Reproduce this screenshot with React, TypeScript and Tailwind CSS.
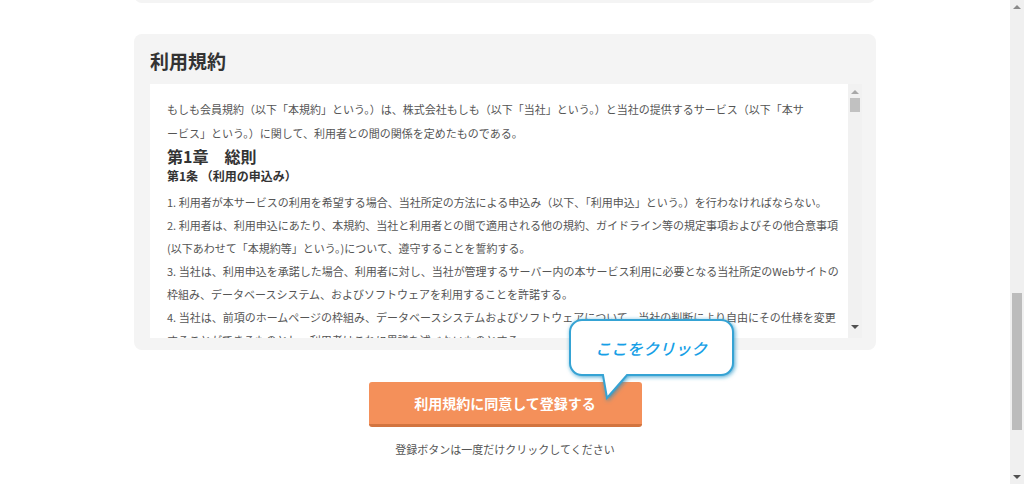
import React from "react";

const Arrow = ({ dir, color }: { dir: "up" | "down"; color: string }) =>
  dir === "up" ? (
    <div
      className="h-0 w-0 border-x-[4px] border-b-[4px] border-x-transparent"
      style={{ borderBottomColor: color }}
    />
  ) : (
    <div
      className="h-0 w-0 border-x-[4px] border-t-[4px] border-x-transparent"
      style={{ borderTopColor: color }}
    />
  );

function Bubble() {
  return (
    <div className="absolute left-[196px] top-[-67px] h-[95px] w-[180px]">
      <svg width="180" height="95" viewBox="0 0 180 95" className="absolute inset-0">
        <defs>
          <filter id="glow" x="-20%" y="-20%" width="140%" height="140%">
            <feDropShadow dx="1" dy="1" stdDeviation="2" floodColor="#1a8fc4" floodOpacity="0.8" />
          </filter>
        </defs>
        <path
          d="M17 5 H156 A12 12 0 0 1 168 17 V48 A12 12 0 0 1 156 60 H62 L42 83 L38 60 H17 A12 12 0 0 1 5 48 V17 A12 12 0 0 1 17 5 Z"
          fill="#ffffff"
          stroke="#36a3d4"
          strokeWidth="2"
          filter="url(#glow)"
        />
      </svg>
      <span className="absolute left-[5px] top-[5px] flex h-[55px] w-[163px] items-center justify-center text-[16px] font-medium italic text-[#179fe6]">
        ここをクリック
      </span>
    </div>
  );
}

export default function App() {
  return (
    <div className="flex h-[484px] w-[1024px] overflow-hidden bg-white font-['Noto_Sans_CJK_JP',sans-serif]">
      <main className="flex flex-1 flex-col items-center">
        {/* previous card, only its bottom edge is visible */}
        <div className="-mt-[37px] h-[40px] w-[742px] rounded-[8px] bg-[#f4f4f4]" />

        {/* terms card */}
        <section className="mt-[31px] w-[742px] rounded-[8px] bg-[#f4f4f4] pb-[12px] pl-4 pr-[14px] pt-[14px]">
          <h2 className="text-[19px] font-bold leading-[26px] text-[#333]">利用規約</h2>
          <div className="mt-[10px] flex h-[254px] bg-white">
            <div className="flex-1 overflow-hidden whitespace-nowrap pl-[17px] pt-[13px] text-[11px] text-[#555]">
              <p className="leading-[24px]">
                もしも会員規約（以下「本規約」という。）は、株式会社もしも（以下「当社」という。）と当社の提供するサービス（以下「本サ
                <br />
                ービス」という。）に関して、利用者との間の関係を定めたものである。
              </p>
              <h3 className="text-[16px] font-bold leading-[22px] text-[#333]">第1章　総則</h3>
              <h4 className="text-[12px] font-bold leading-[18px] text-[#333]">第1条 （利用の申込み）</h4>
              <div className="mt-[6px] leading-[23px]">
                <div>1. 利用者が本サービスの利用を希望する場合、当社所定の方法による申込み（以下、「利用申込」という。）を行わなければならない。</div>
                <div>2. 利用者は、利用申込にあたり、本規約、当社と利用者との間で適用される他の規約、ガイドライン等の規定事項およびその他合意事項</div>
                <div>(以下あわせて「本規約等」という。)について、遵守することを誓約する。</div>
                <div>3. 当社は、利用申込を承諾した場合、利用者に対し、当社が管理するサーバー内の本サービス利用に必要となる当社所定のWebサイトの</div>
                <div>枠組み、データベースシステム、およびソフトウェアを利用することを許諾する。</div>
                <div>4. 当社は、前項のホームページの枠組み、データベースシステムおよびソフトウェアについて、当社の判断により自由にその仕様を変更</div>
                <div>することができるものとし、利用者はこれに異議を述べないものとする。</div>
              </div>
            </div>
            {/* inner scrollbar */}
            <div className="flex w-[14px] flex-col items-center bg-[#f1f1f1] pb-[9px] pt-[6px]">
              <Arrow dir="up" color="#a8a8a8" />
              <div className="mt-[4px] h-[14px] w-[10px] bg-[#c1c1c1]" />
              <div className="flex-1" />
              <Arrow dir="down" color="#505050" />
            </div>
          </div>
        </section>

        {/* register button */}
        <div className="relative mt-[32px]">
          <button className="flex h-[45px] w-[273px] items-center justify-center rounded-[3px] border-b-[3px] border-[#d2743f] bg-[#f4905a] text-[14px] font-bold text-white">
            利用規約に同意して登録する
          </button>
          <Bubble />
        </div>
        <p className="mt-[13px] text-[11px] leading-[18px] text-[#555]">登録ボタンは一度だけクリックしてください</p>
      </main>

      {/* page scrollbar */}
      <div className="flex w-[14px] flex-col items-center bg-[#f0f0f0] pb-[5px] pt-[5px]">
        <Arrow dir="up" color="#8a8a8a" />
        <div className="mt-[284px] h-[137px] w-[10px] bg-[#bcbcbc]" />
        <div className="flex-1" />
        <Arrow dir="down" color="#505050" />
      </div>
    </div>
  );
}
